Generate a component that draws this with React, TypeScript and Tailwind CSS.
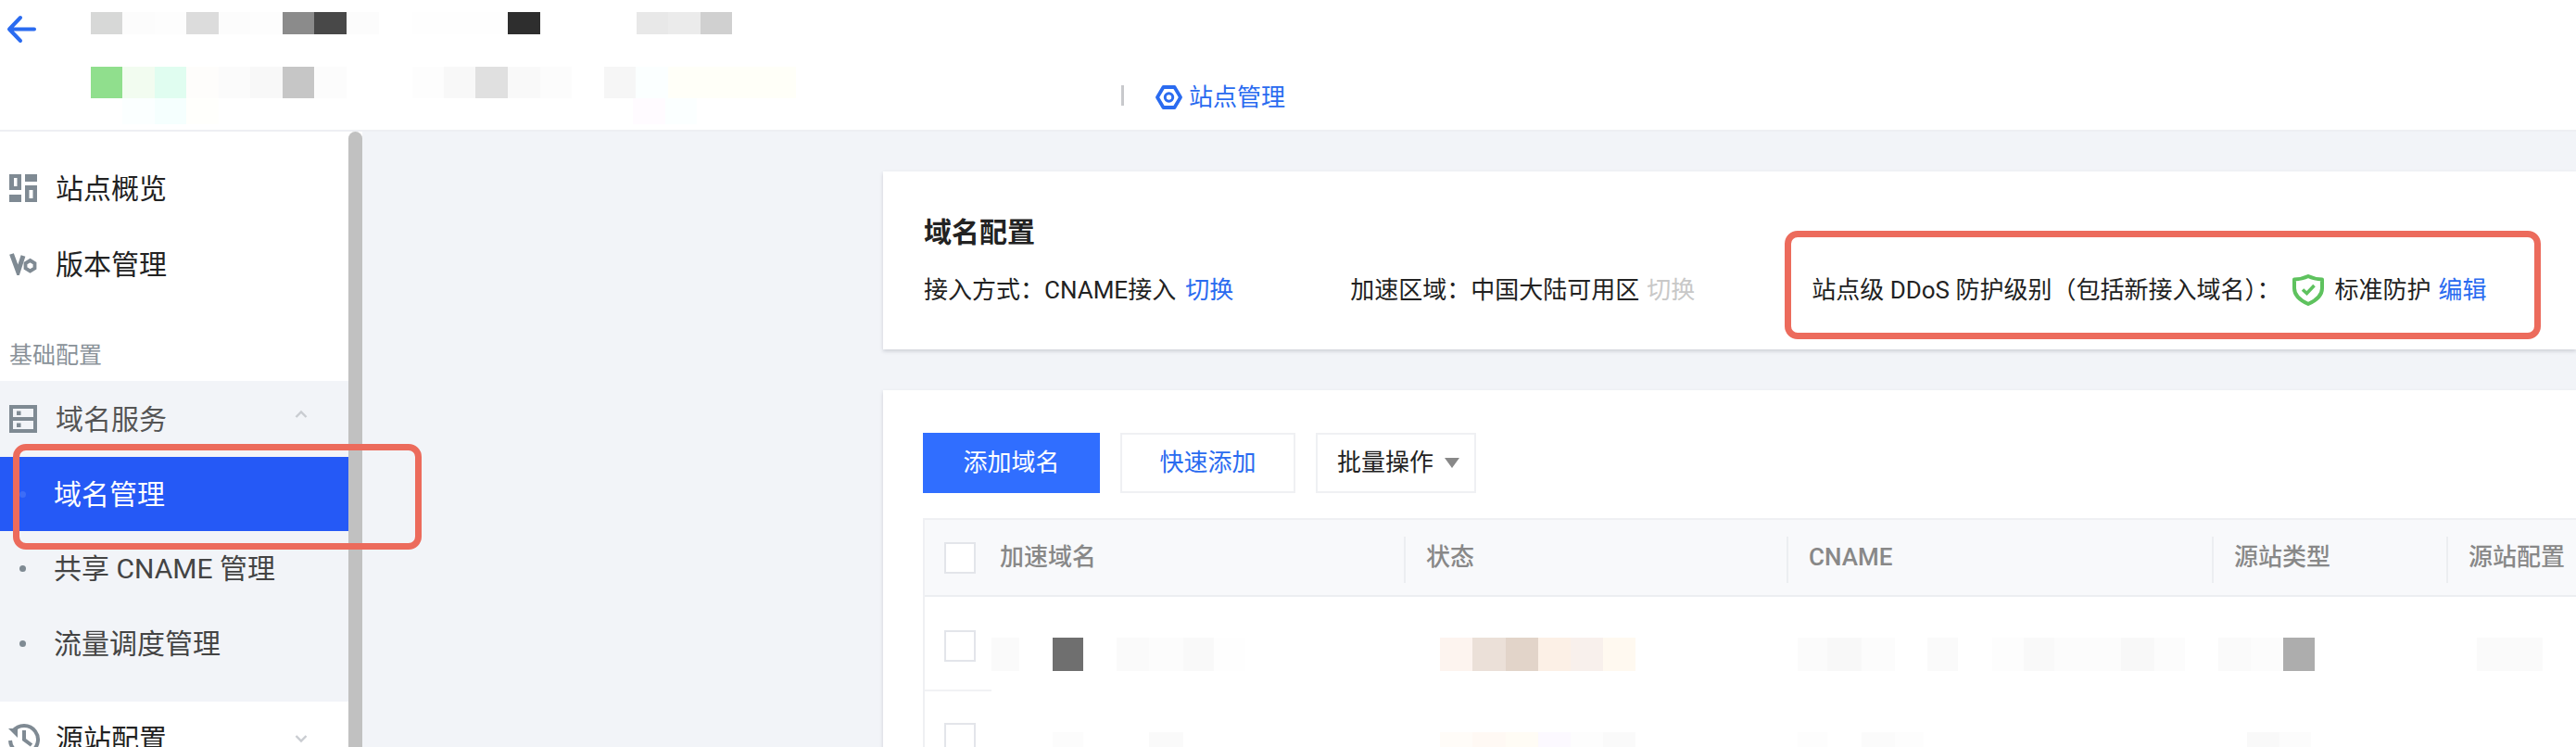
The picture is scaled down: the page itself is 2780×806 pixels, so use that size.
import React from "react";

const font = "font-['Roboto','Noto_Sans_CJK_SC',sans-serif]";

function M({ c }: { c: string }) {
  return <div className={c} />;
}

function Arrow() {
  return (
    <svg width="32" height="32" viewBox="0 0 32 32" fill="none" className="block">
      <path d="M15 3 3 15.500 15 28M4 15.500h26" stroke="#2a6bf0" strokeWidth="4" strokeLinecap="round" strokeLinejoin="round" />
    </svg>
  );
}

function SiteIcon() {
  return (
    <svg width="29" height="26" viewBox="0 0 29 26" fill="none" className="block">
      <path d="M8.500 2h12L27 13l-6.500 11h-12L2 13z" stroke="#2a6bf0" strokeWidth="3.800" strokeLinejoin="round" />
      <circle cx="14.500" cy="13" r="4.200" stroke="#2a6bf0" strokeWidth="3" />
    </svg>
  );
}

function OverviewIcon() {
  return (
    <svg width="30" height="30" viewBox="0 0 30 30" fill="#7f8a93" className="block">
      <path fillRule="evenodd" d="M0 0h13v17H0zM5 4v9h3.500V4z" />
      <path d="M17 0h13v8H17zM0 22h13v8H0z" />
      <path fillRule="evenodd" d="M17 12h13v18H17zM21.500 17v9h4v-9z" />
    </svg>
  );
}

function VersionIcon() {
  return (
    <svg width="30" height="24" viewBox="0 0 30 24" fill="none" className="block">
      <path d="M2.500 1 9.500 20 15 3" stroke="#7f8a93" strokeWidth="5" />
      <path d="M22.500 8 27.500 11v5.500l-5 3-5-3V11z" stroke="#7f8a93" strokeWidth="3.800" />
    </svg>
  );
}

function DomainIcon() {
  return (
    <svg width="30" height="30" viewBox="0 0 30 30" fill="#7f8a93" className="block">
      <path fillRule="evenodd" d="M0 0h30v30H0zM4 4v9h22V4zM4 17v9h22v-9z" />
      <path d="M8 6.500h4.500V11H8zM8 19.500h4.500V24H8z" />
    </svg>
  );
}

function HistoryIcon() {
  return (
    <svg width="36" height="36" viewBox="0 0 36 36" fill="none" className="block">
      <path d="M6 10a15 15 0 1 1-3 10" stroke="#7f8a93" strokeWidth="4" />
      <path d="M1 7h10v10z" fill="#7f8a93" />
      <path d="M18 9v10l8 6" stroke="#7f8a93" strokeWidth="4" />
    </svg>
  );
}

function Chevron({ up }: { up?: boolean }) {
  return (
    <svg width="14" height="10" viewBox="0 0 14 10" fill="none" className="block">
      <path d={up ? "M1.500 8 7 2.500 12.500 8" : "M1.500 2 7 7.500 12.500 2"} stroke="#c9ccd1" strokeWidth="2.400" />
    </svg>
  );
}

function Shield() {
  return (
    <svg width="34" height="34" viewBox="0 0 34 34" fill="none" className="block">
      <path d="M17 2C21.500 4.200 26 5.200 32 5.500v9.500c0 7.500-6 13-15 17C8 28 2 22.500 2 15V5.500C8 5.200 12.500 4.200 17 2z" stroke="#5ec25e" strokeWidth="4" strokeLinejoin="round" />
      <path d="m11 16.500 4.500 4L23.500 12" stroke="#5ec25e" strokeWidth="3.600" />
    </svg>
  );
}

function Checkbox({ className }: { className: string }) {
  return <div className={"w-[34px] h-[34px] shrink-0 bg-white border-2 border-[#e3e5ea] " + className} />;
}

function NavTop({ icon, label }: { icon: React.ReactNode; label: string }) {
  return (
    <div className="h-[82px] flex items-center pl-[10px] text-[30px] text-[#222222]">
      <div className="w-[50px] shrink-0 flex items-center">{icon}</div>
      <span>{label}</span>
    </div>
  );
}

function SubItem({ label }: { label: string }) {
  return (
    <div className="h-[81px] flex items-center pl-[21px] text-[30px] text-[#444444]">
      <span className="w-[7px] h-[7px] rounded-full bg-[#7f8a93] mr-[30px]" />
      <span>{label}</span>
    </div>
  );
}

function Header() {
  return (
    <div className="h-[142px] shrink-0 bg-white border-b-2 border-[#eeeff3] flex relative">
      <div className="w-[98px] pl-[7px] pt-[16px] shrink-0">
        <Arrow />
      </div>
      <div className="flex flex-col pt-[13px]">
        <div className="flex h-[24px]">
          <M c="w-[34px] bg-[#d7d8d7]" />
          <M c="w-[35px] bg-[#fcfcfc]" />
          <M c="w-[34px] bg-[#fdfdfd]" />
          <M c="w-[35px] bg-[#dcdcdc]" />
          <M c="w-[34px] bg-[#fcfcfc]" />
          <M c="w-[35px] bg-[#fdfdfd]" />
          <M c="w-[34px] bg-[#8b8b8b]" />
          <M c="w-[35px] bg-[#484848]" />
          <M c="w-[35px] bg-[#fcfcfc]" />
          <M c="w-[36px]" />
          <M c="w-[103px] bg-[#fefefe]" />
          <M c="w-[35px] bg-[#2e2e2e]" />
          <M c="w-[104px]" />
          <M c="w-[34px] bg-[#e8e8e8]" />
          <M c="w-[35px] bg-[#ebebeb]" />
          <M c="w-[34px] bg-[#d0d0d0]" />
        </div>
        <div className="flex h-[34px] mt-[35px]">
          <M c="w-[34px] bg-[#90df8d]" />
          <M c="w-[35px] bg-[#f2fcf0]" />
          <M c="w-[34px] bg-[#e0fdf0]" />
          <M c="w-[35px] bg-[#fefdfb]" />
          <M c="w-[34px] bg-[#fbfbfb]" />
          <M c="w-[35px] bg-[#f8f8f8]" />
          <M c="w-[34px] bg-[#c6c6c6]" />
          <M c="w-[35px] bg-[#fcfcfc]" />
          <M c="w-[71px]" />
          <M c="w-[34px] bg-[#fdfdfd]" />
          <M c="w-[34px] bg-[#f8f8f8]" />
          <M c="w-[35px] bg-[#e0e0e0]" />
          <M c="w-[35px] bg-[#f9f9f9]" />
          <M c="w-[34px] bg-[#fcfcfc]" />
          <M c="w-[35px]" />
          <M c="w-[34px] bg-[#f6f6f6]" />
          <M c="w-[35px] bg-[#fbffff]" />
          <M c="w-[138px] bg-[#fffff8]" />
        </div>
        <div className="flex h-[28px]">
          <M c="w-[34px]" />
          <M c="w-[35px] bg-[#fbffff]" />
          <M c="w-[34px] bg-[#f5fffe]" />
          <M c="w-[35px] bg-[#fffffc]" />
          <M c="w-[447px]" />
          <M c="w-[35px] bg-[#fffbff]" />
          <M c="w-[34px] bg-[#fbffff]" />
        </div>
      </div>
      <div className="absolute left-[1210px] top-[92px] flex items-center h-[26px]">
        <div className="w-[3px] h-[22px] bg-[#c8c9cc] self-start" />
        <div className="ml-[34px]"><SiteIcon /></div>
        <span className="ml-[7px] text-[26px] text-[#2a6bf0]">站点管理</span>
      </div>
    </div>
  );
}

function Sidebar() {
  return (
    <div className="w-[376px] shrink-0 bg-white pt-[20px]">
      <NavTop icon={<OverviewIcon />} label="站点概览" />
      <NavTop icon={<VersionIcon />} label="版本管理" />
      <div className="h-[64px] mt-[21px] pl-[10px] pt-[10px] flex items-center text-[25px] text-[#8a9299]">基础配置</div>
      <div className="bg-[#f2f4f8] h-[346px]">
        <div className="h-[82px] flex items-center pl-[10px] text-[30px] text-[#555555] relative">
          <div className="w-[50px] shrink-0 flex items-center"><DomainIcon /></div>
          <span>域名服务</span>
          <span className="absolute left-[318px] top-[31px]"><Chevron up /></span>
        </div>
        <div className="h-[80px] bg-[#2559f6] flex items-center pl-[21px] text-[30px] text-white">
          <span className="w-[7px] h-[7px] rounded-full bg-[#3d6df7] mr-[30px]" />
          <span>域名管理</span>
        </div>
        <SubItem label="共享 CNAME 管理" />
        <SubItem label="流量调度管理" />
      </div>
      <div className="h-[80px] flex items-center pl-[8px] text-[30px] text-[#222222] relative">
        <div className="w-[52px] shrink-0 flex items-center"><HistoryIcon /></div>
        <span>源站配置</span>
        <span className="absolute left-[318px] top-[35px]"><Chevron /></span>
      </div>
    </div>
  );
}

function HeadCell({ className, label }: { className: string; label: string }) {
  return (
    <div className={"relative flex items-center shrink-0 pl-[24px] " + className}>
      <span className="absolute left-0 top-[18px] w-[2px] h-[50px] bg-[#eceef1]" />
      <span className="text-[#888888] font-medium text-[26px]">{label}</span>
    </div>
  );
}

function Table() {
  return (
    <div className="border-l-2 border-t-2 border-[#eff0f3] mr-[-20px]">
      <div className="h-[83px] bg-[#f8f9fb] border-b-2 border-[#eceef1] flex">
        <div className="w-[81px] shrink-0 flex items-center pl-[21px]"><Checkbox className="" /></div>
        <div className="w-[436px] shrink-0 flex items-center">
          <span className="text-[26px] text-[#888888] font-medium">加速域名</span>
        </div>
        <HeadCell className="w-[413px]" label="状态" />
        <HeadCell className="w-[459px]" label="CNAME" />
        <HeadCell className="w-[253px]" label="源站类型" />
        <HeadCell className="w-[160px]" label="源站配置" />
      </div>
      <div className="h-[102px] flex relative">
        <div className="absolute left-0 bottom-0 w-[72px] h-[2px] bg-[#f1f2f4]" />
        <Checkbox className="mt-[36px] ml-[21px]" />
        <div className="flex h-[36px] mt-[44px] ml-[17px]">
          <M c="w-[30px] bg-[#fafafa]" />
          <M c="w-[36px]" />
          <M c="w-[33px] bg-[#6f6f6f]" />
          <M c="w-[36px]" />
          <M c="w-[35px] bg-[#fafafa]" />
          <M c="w-[37px] bg-[#fcfcfc]" />
          <M c="w-[33px] bg-[#f9f9f9]" />
          <M c="w-[34px] bg-[#fefefe]" />
          <M c="w-[210px]" />
          <M c="w-[35px] bg-[#fdf4ef]" />
          <M c="w-[36px] bg-[#ebe0d8]" />
          <M c="w-[35px] bg-[#e2d4c9]" />
          <M c="w-[35px] bg-[#fcf0e6]" />
          <M c="w-[35px] bg-[#f8f0ec]" />
          <M c="w-[35px] bg-[#fff9f0]" />
          <M c="w-[175px]" />
          <M c="w-[32px] bg-[#fbfbfb]" />
          <M c="w-[37px] bg-[#f8f8f8]" />
          <M c="w-[36px] bg-[#fcfcfc]" />
          <M c="w-[35px]" />
          <M c="w-[33px] bg-[#fafafa]" />
          <M c="w-[37px]" />
          <M c="w-[34px] bg-[#fdfdfd]" />
          <M c="w-[33px] bg-[#f9f9f9]" />
          <M c="w-[72px] bg-[#fcfcfc]" />
          <M c="w-[36px] bg-[#f8f8f8]" />
          <M c="w-[33px] bg-[#fcfcfc]" />
          <M c="w-[36px]" />
          <M c="w-[35px] bg-[#fafafa]" />
          <M c="w-[35px] bg-[#fcfcfc]" />
          <M c="w-[34px] bg-[#adadad]" />
          <M c="w-[175px]" />
          <M c="w-[71px] bg-[#fafafa]" />
        </div>
      </div>
      <div className="h-[60px] flex">
        <Checkbox className="mt-[34px] ml-[21px]" />
        <div className="flex h-[20px] mt-[44px] ml-[83px]">
          <M c="w-[33px] bg-[#fcfcfc]" />
          <M c="w-[71px]" />
          <M c="w-[37px] bg-[#fafafa]" />
          <M c="w-[277px]" />
          <M c="w-[35px] bg-[#fffcf8]" />
          <M c="w-[36px] bg-[#fff9f4]" />
          <M c="w-[35px] bg-[#fffcf5]" />
          <M c="w-[35px] bg-[#fcf9ff]" />
          <M c="w-[35px] bg-[#fdfdfd]" />
          <M c="w-[35px] bg-[#fafafa]" />
          <M c="w-[175px]" />
          <M c="w-[32px] bg-[#fdfdfd]" />
          <M c="w-[37px]" />
          <M c="w-[36px] bg-[#fbfbfb]" />
          <M c="w-[31px] bg-[#fdfdfd]" />
          <M c="w-[349px]" />
          <M c="w-[35px] bg-[#f9f9f9]" />
          <M c="w-[34px] bg-[#fcfcfc]" />
        </div>
      </div>
    </div>
  );
}

function Main() {
  return (
    <div className="flex-1 min-w-0 bg-[#f2f4f8] pl-[562px] pt-[43px]">
      <div className="h-[192px] bg-white shadow-[0_2px_4px_rgba(54,58,80,0.2)] px-[44px] pt-[46px]">
        <div className="text-[30px] leading-[40px] font-semibold text-[#222222]">域名配置</div>
        <div className="flex items-center h-[40px] mt-[22px] text-[26px] text-[#222222] whitespace-nowrap">
          <span>接入方式：CNAME接入</span>
          <span className="ml-[10px] text-[#2a6bf0]">切换</span>
          <span className="ml-[126px]">加速区域：中国大陆可用区</span>
          <span className="ml-[8px] text-[#c8c8c8]">切换</span>
          <span className="ml-[126px]">站点级 DDoS 防护级别（包括新接入域名）：</span>
          <span className="ml-[13px] shrink-0"><Shield /></span>
          <span className="ml-[11px]">标准防护</span>
          <span className="ml-[8px] text-[#2a6bf0]">编辑</span>
        </div>
      </div>
      <div className="mt-[44px] bg-white shadow-[0_2px_4px_rgba(54,58,80,0.2)] pl-[43px] pt-[46px] h-[500px]">
        <div className="flex gap-[22px] text-[26px]">
          <button className="w-[191px] h-[65px] bg-[#306eff] text-white">添加域名</button>
          <button className="w-[189px] h-[65px] bg-white border-2 border-[#eff0f3] text-[#2a6bf0]">快速添加</button>
          <button className="w-[173px] h-[65px] bg-white border-2 border-[#eff0f3] text-[#222222] flex items-center pl-[21px]">
            <span>批量操作</span>
            <span className="ml-[12px] w-0 h-0 border-l-[8px] border-r-[8px] border-t-[11px] border-l-transparent border-r-transparent border-t-[#888888]" />
          </button>
        </div>
        <div className="mt-[27px]"><Table /></div>
      </div>
    </div>
  );
}

export default function App() {
  return (
    <div className={"relative w-[2780px] h-[806px] overflow-hidden flex flex-col bg-white " + font}>
      <Header />
      <div className="flex flex-1 min-h-0">
        <Sidebar />
        <div className="w-[15px] shrink-0 bg-[#c1c1c1] rounded-t-[8px]" />
        <Main />
      </div>
      <div className="absolute left-[14px] top-[479px] w-[441px] h-[114px] border-[7px] border-[#ec6b5c] rounded-[14px]" />
      <div className="absolute left-[1926px] top-[249px] w-[816px] h-[117px] border-[7px] border-[#ec6b5c] rounded-[14px]" />
    </div>
  );
}
